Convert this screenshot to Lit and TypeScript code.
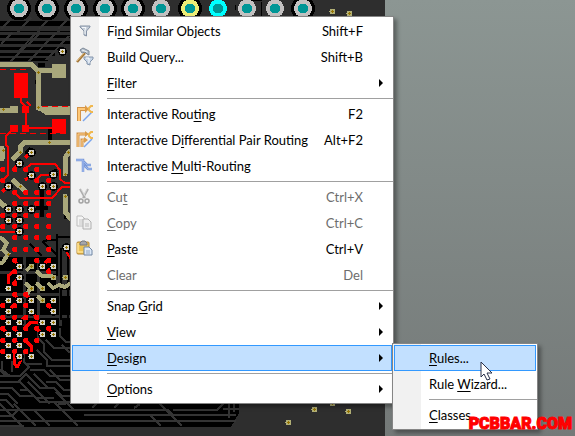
import { LitElement, html, svg, css, nothing } from "lit";
import { customElement, property } from "lit/decorators.js";
import { classMap } from "lit/directives/class-map.js";

type Entry = {
  label: string;
  at?: number; // index of the underlined letter
  hint?: string;
  icon?: string;
  more?: boolean;
  off?: boolean;
  on?: boolean;
};

const MAIN: Entry[][] = [
  [
    { label: "Find Similar Objects", at: 2, hint: "Shift+F", icon: "funnel" },
    { label: "Build Query...", hint: "Shift+B", icon: "hammer" },
    { label: "Filter", at: 0, more: true },
  ],
  [
    { label: "Interactive Routing", at: 15, hint: "F2", icon: "route" },
    { label: "Interactive Differential Pair Routing", at: 13, hint: "Alt+F2", icon: "pair" },
    { label: "Interactive Multi-Routing", at: 12, icon: "multi" },
  ],
  [
    { label: "Cut", at: 2, hint: "Ctrl+X", icon: "cut", off: true },
    { label: "Copy", at: 0, hint: "Ctrl+C", icon: "copy", off: true },
    { label: "Paste", at: 0, hint: "Ctrl+V", icon: "paste" },
    { label: "Clear", hint: "Del", off: true },
  ],
  [
    { label: "Snap Grid", at: 5, more: true },
    { label: "View", at: 0, more: true },
    { label: "Design", at: 0, more: true, on: true },
  ],
  [{ label: "Options", at: 0, more: true }],
];

const SUB: Entry[][] = [
  [
    { label: "Rules...", at: 0, on: true },
    { label: "Rule Wizard...", at: 5 },
  ],
  [{ label: "Classes...", at: 0 }],
];

const funnel = svg`<path d="M1 1H11V2L7.500 6V11L5 10V6L1 2Z" fill="#c3ccd7" stroke="#8592a5"/><path d="M3 2.500H7L6 5V9" fill="none" stroke="#f5f8fb"/>`;

const ICONS: Record<string, unknown> = {
  funnel: svg`<g transform="translate(3 3)">${funnel}</g>`,
  hammer: svg`<path d="M1 14L9 5" stroke="#a4783b" stroke-width="2.500"/><path d="M1 13L8 5" stroke="#e2bd80"/><path d="M4 2L7 0L13 3V7L11 6L9 4L6 5Z" fill="#b5bfca" stroke="#7d8998"/><path d="M6 2L11 4" stroke="#edf2f5"/><path d="M8 9H17V11L14 14V17L11 16V14L8 11Z" fill="#c6d4e5" stroke="#8495ac"/><path d="M10 10H13V15" stroke="#fff"/>`,
  route: svg`<path d="M3 16V4H10" stroke="#d3944a" stroke-width="4"/><path d="M3 16V4H10" stroke="#ffc877" stroke-width="2"/><path d="M9 0L13 4L9 8Z" fill="#dd9b45"/><path d="M7 16L16 7" stroke="#79a4ed" stroke-width="1.500"/><path d="M17 1H15L13 3V5L15 7H17" stroke="#f0b84f" stroke-width="2"/>`,
  pair: svg`<path d="M2 16V3H10M6 16V9H9" stroke="#d3944a" stroke-width="3"/><path d="M2 16V3H10M6 16V9H9" stroke="#ffd08a"/><path d="M9 0L13 3L9 6ZM8 6L12 9L8 12Z" fill="#d99c4b"/><path d="M8 16L16 8" stroke="#79a4ed" stroke-width="1.500"/><path d="M17 1H15L13 3V5L15 7H17" stroke="#f0b84f" stroke-width="2"/>`,
  multi: svg`<path d="M0 3H7V15M7 4L11 8H15M8 8L12 12H16" stroke="#7b99d8" stroke-width="2.500"/><path d="M0 3H7V15" stroke="#a3bdf3"/><path d="M8 5L11 8H15M9 9L12 12H16" stroke="#9ab8ee"/>`,
  cut: svg`<path d="M4 1L9 10M12 1L7 10" stroke="#adadad" stroke-width="2"/><path d="M5 1L9 8M11 1L8 7" stroke="#dadada"/><circle cx="5" cy="13" r="2" fill="#eee" stroke="#a3a3a3" stroke-width="1.500"/><circle cx="11" cy="13" r="2" fill="#eee" stroke="#a3a3a3" stroke-width="1.500"/>`,
  copy: svg`<path d="M1 2H6L9 5V12H1Z" fill="#f5f5f5" stroke="#bdbdbd"/><path d="M3 6H7M3 8H7M3 10H7" stroke="#c5c5c5"/><path d="M7 5H12L15 8V15H7Z" fill="#eee" stroke="#b0b0b0"/><path d="M9 10H13M9 12H13" stroke="#bbb"/>`,
  paste: svg`<rect x="1" y="2" width="12" height="12" rx="1" fill="#ecc355" stroke="#b58632"/><path d="M2 3V12H7" stroke="#ffe496" stroke-width="1.500"/><path d="M4 3L6 1H9L11 3V5H4Z" fill="#a5a6a9" stroke="#747881"/><path d="M8 7H13L16 10V15H8Z" fill="#dce8f7" stroke="#7186a3"/><path d="M10 11H14M10 13H14" stroke="#91a8c6"/>`,
};

/* ---- circuit board ---- */
const PADS = [19, 47, 76, 105, 133, 161, 190, 218, 247, 275, 303];
const RINGED = [19, 47, 76, 105, 133, 190, 303];
const padFill = (x: number) => (x === 190 ? "#eded76" : x === 218 ? "#00ffff" : "#c3c1c1");

const DOTS: Array<[number, number[]]> = [
  [169, [2, 14, 25, 36]], [180, [2, 36, 48]], [192, [14, 25, 36, 48]],
  [203, [14, 25, 36, 48]], [215, [2, 14, 25, 36, 48]], [226, [2, 14, 25, 36, 48]],
  [237, [14, 25, 36, 48]], [249, [14, 25, 36, 48]], [260, [14, 36, 48]],
  [271, [14, 48]], [283, [14]], [294, [14, 25]], [305, [2, 14, 25, 48]],
  [317, [2, 14, 25, 36]], [328, [2, 14, 25, 36, 48]], [340, [2, 14, 25, 36]],
  [351, [2, 14, 25]],
];

const VIAS: Array<[number, number]> = [
  [62, 51], [31, 152], [19, 163], [31, 175], [8, 186], [53, 174], [42, 186], [53, 186],
  [8, 209], [19, 209], [31, 209], [8, 220], [19, 220], [19, 231], [66, 247], [19, 266],
  [42, 266], [53, 266], [19, 277], [8, 288], [8, 300], [19, 300], [31, 300], [53, 300],
  [8, 311], [31, 311], [53, 311], [8, 322], [19, 322], [42, 322], [53, 322], [8, 334],
  [19, 334], [42, 334], [53, 334], [8, 345], [19, 345], [8, 356], [19, 356], [31, 356],
];
const OLIVE_VIAS: Array<[number, number]> = [
  [31, 266], [53, 277], [65, 277], [31, 288], [42, 288], [42, 300],
  [332, 11], [349, 13], [288, 422], [314, 409], [348, 411], [332, 403],
];
const DRILLS: Array<[number, number]> = [
  [38, 72], [38, 107], [3, 109], [3, 150], [49, 142], [20, 152], [68, 152], [65, 174], [20, 186], [65, 196], [8, 254],
];

const cross = (x: number, y: number) =>
  svg`<path d="M${x - 1} ${y + 0.5}h3M${x + 0.5} ${y - 1}v3" stroke="#967400"/>`;

const board = svg`
  <g stroke="#000" fill="none">
    <path d="M0 36H70M0 42H70M0 48H62M0 54H55M0 59H48" stroke-width="3"/>
    <path d="M0 23H70" stroke-width="5"/>
    <path d="M0 31H70" stroke-width="1" stroke-dasharray="17 3"/>
    <path d="M38 65H45M35 82H36M42 187V217M36 208H48M66 209V219M50 128V140M31 148L26 154M57 170L52 174" stroke-width="4"/>
    <path d="M0 300H70" stroke-width="4"/>
  </g>
  <path d="M1 29L12 18M20 29L31 18M39 29L50 18M58 29L69 18M1 44L12 33M20 50L36 33M10 62L40 33M28 62L56 33M46 60L69 36" stroke="#333" stroke-width="2"/>
  <path d="M0 257H56V285H70V332H0Z" fill="#000"/>
  <path d="M24 255V330M0 272H70M0 294H70M38 260V325M60 240V332M0 316H70M57 242H70M60 258H70M59 291H70" stroke="#303030" stroke-width="3"/>
  <path d="M57 234V276M61 248V320M68 250V330M30 244L42 256M43 242L56 254M57 237H70M42 242L48 240H57" fill="none" stroke="#000" stroke-width="2"/>
  <path d="M0 326H70V404H239V413L231 427H0Z" fill="#000"/>
  <g fill="none" stroke="#343434" stroke-width="2">
    <path d="M38 330V338L44 344V352L52 360H70M46 340L54 348H70M60 328V336L66 342H70M62 345L70 353M24 352V362L30 368M37 350L47 360V366H70M12 361V372M2 361V370L10 376M26 364H42M30 370H44L50 376H70M0 376H20L28 368M0 382H18L26 374L40 388H54L62 396H70M50 370L60 380H70M34 374L48 388M0 388H12L20 396H34L40 402H70M20 382L36 398H54M0 394H8L18 404M28 382L50 404M46 382H56L64 390H70M0 400H6L14 408M56 392L68 404M28 390H20M0 370L6 376"/>
    <path d="M0 410H168L174 416M0 416H12L18 410M0 421H236M0 404L22 426M14 404L36 426M54 402L78 426M66 402L74 410M34 410L50 426M58 404H66M0 426H24M96 404L92 408M118 404L114 408M140 404L134 408M160 404L182 426M151 416L161 426M84 415H236M173 410H217L224 403M229 403V418M223 409H239M234 403V412"/>
  </g>
  <g fill="none" stroke="#a9a77b" stroke-width="5">
    <path d="M0 64H31L38 71V110M38 70H52M38 108H70M10 108H18M42 109L46 112H70M0 110H18"/>
    <path d="M14 158L20 152V147L25 142H70M65 174V158L69 152M65 196V212L71 219M14 181L25 191M0 202L8 209M2 148V159" stroke-linecap="round"/>
    <path d="M0 237L7 243L3 250L8 254L3 262L0 264M26 271L31 266M36 271L42 276H53M25 283L31 288M36 283L42 288M26 295L31 288M37 296L42 300M48 283L53 288L59 285L65 287L71 283" stroke-width="4"/>
  </g>
  <rect x="52" y="64" width="14" height="14" fill="#a9a77b"/>
  <g fill="none" stroke="#f00" stroke-width="2">
    <path d="M0 69.500H27M42 106.500H70M0 133.500H70" stroke-dasharray="6 4" stroke-width="1"/>
    <path d="M21 98V102L26 107V128H52M27 102L31 106M14 128L6 136V145L8 147V175L2 181M25 169L31 164H55L60 170V179L65 183H70M36 180L41 175H53M14 192L20 198H52L62 187H70M0 232H19M67 247V253L71 259"/>
    <path d="M25 158L31 152M14 169L19 163M25 180L31 175M2 192L8 186M48 260L42 266M8 288V276L14 271M19 266L14 260M14 283L19 277M48 271L53 266M19 300L14 294M31 300L25 294M8 311L14 305M36 317L31 311M53 311L48 305M8 322L2 317M19 322L25 317M25 328L31 322H42M8 334L2 328M19 334L14 328M42 334L36 328M53 334L48 328M8 345L2 340M19 345L14 340M31 356V346L25 340M14 351V363L16 366H18L20 362V356" stroke-width="3"/>
  </g>
  <path d="M14 73H28V98H14ZM22 106H29V113H22ZM10 125H18V132H10ZM22 125H29V132H22ZM52 119H66V133H52Z" fill="#f00"/>
  ${DOTS.map(([y, xs]) => xs.map((x) => svg`<path d="M${x - 1} ${y - 2}h3l1 1v3l-1 1h-3l-1 -1v-3Z" fill="#f00"/>`))}
  ${VIAS.map(([x, y]) => svg`<circle cx=${x + 0.5} cy=${y + 0.5} r="4.500" fill="#000"/><circle cx=${x + 0.5} cy=${y + 0.5} r="3" fill="#d4d1c8"/>${cross(x, y)}`)}
  ${OLIVE_VIAS.map(([x, y]) => svg`<circle cx=${x + 0.5} cy=${y + 0.5} r="3" fill="#b1af75"/>${cross(x, y)}`)}
  ${DRILLS.map(([x, y]) => cross(x, y))}
  <path d="M235.500 5V10M261.500 2V16M245 0.500H262" stroke="#000" fill="none"/>
  ${RINGED.map((x) => svg`<circle cx=${x} cy="8.500" r="12" fill="#000"/>`)}
  ${PADS.map((x) => svg`<circle cx=${x} cy="8.500" r="9" fill=${padFill(x)}/><circle cx=${x} cy="8.500" r="5" fill="#009696"/>`)}
`;

@customElement("context-menu")
class ContextMenu extends LitElement {
  @property({ attribute: false }) groups: Entry[][] = [];

  static styles = css`
    :host {
      display: block;
      box-sizing: border-box;
      padding: 1px;
      border: 1px solid #858585;
      background: linear-gradient(90deg, #f1f1f1 28px, #fff 28px);
      box-shadow: 3px 3px 4px rgba(0, 0, 0, 0.35);
      font: 13px/24px Lato, "Noto Sans", sans-serif;
    }
    hr {
      height: 1px;
      margin: 2px -1px 2px 35px;
      border: 0;
      background: #a0a0a0;
    }
    button {
      display: grid;
      grid-template-columns: 34px 1fr auto 28px;
      align-items: center;
      width: 100%;
      height: 26px;
      padding: 0;
      border: 1px solid transparent;
      background: none;
      color: #000;
      font: inherit;
      text-align: left;
      white-space: nowrap;
    }
    button:disabled { color: #6d6d6d; }
    .on { border-color: #3399ff; background: #c2e0ff; }
    .icon { display: block; width: 18px; height: 18px; margin-left: 3px; overflow: visible; }
    .arrow {
      width: 0;
      height: 0;
      margin-left: 16px;
      border: 4px solid transparent;
      border-left-color: #000;
      border-right: 0;
    }
    u { text-underline-offset: 2px; text-decoration-thickness: 1px; text-decoration-skip-ink: none; }
  `;

  label(e: Entry) {
    const i = e.at;
    if (i === undefined) return e.label;
    return html`${e.label.slice(0, i)}<u>${e.label[i]}</u>${e.label.slice(i + 1)}`;
  }

  render() {
    return this.groups.map(
      (group, i) => html`${i ? html`<hr />` : nothing}${group.map(
        (e) => html`<button role="menuitem" class=${classMap({ on: !!e.on })} ?disabled=${!!e.off} aria-haspopup=${e.more ? "menu" : "false"}>
          <span>${e.icon ? html`<svg class="icon" viewBox="0 0 18 18" fill="none" aria-hidden="true">${ICONS[e.icon]}</svg>` : nothing}</span>
          <span>${this.label(e)}</span>
          <span>${e.hint ?? nothing}</span>
          ${e.more ? html`<span class="arrow"></span>` : html`<span></span>`}
        </button>`
      )}`
    );
  }
}

@customElement("app-root")
class AppRoot extends LitElement {
  static styles = css`
    :host {
      display: block;
      position: relative;
      min-height: 100vh;
      overflow: hidden;
      background: linear-gradient(#8c9693, #747978);
    }
    .board {
      position: absolute;
      inset: 0 auto 0 0;
      width: 385px;
      height: 100%;
      background: #2e2e2e;
    }
    .main { position: absolute; left: 70px; top: 16px; width: 324px; }
    .sub { position: absolute; left: 392px; top: 343px; width: 146px; }
    .pointer { position: absolute; left: 480px; top: 361px; }
    .mark {
      position: absolute;
      right: 3px;
      bottom: 2px;
      color: #f00;
      font: 900 16px/20px "Roboto", "Liberation Sans", sans-serif;
      -webkit-text-stroke: 1px #f00;
    }
  `;

  render() {
    return html`
      <svg class="board" viewBox="0 0 385 436" preserveAspectRatio="xMinYMin slice" shape-rendering="crispEdges" aria-hidden="true">${board}</svg>
      <context-menu class="main" role="menu" .groups=${MAIN}></context-menu>
      <context-menu class="sub" role="menu" aria-label="Design" .groups=${SUB}></context-menu>
      <svg class="pointer" width="13" height="20" viewBox="0 0 13 20" aria-hidden="true">
        <path d="M1 1V16L4 13L7 19L10 18L7 12H12Z" fill="#fff" stroke="#28304a" />
      </svg>
      <div class="mark">PCBBAR.COM</div>
    `;
  }
}
